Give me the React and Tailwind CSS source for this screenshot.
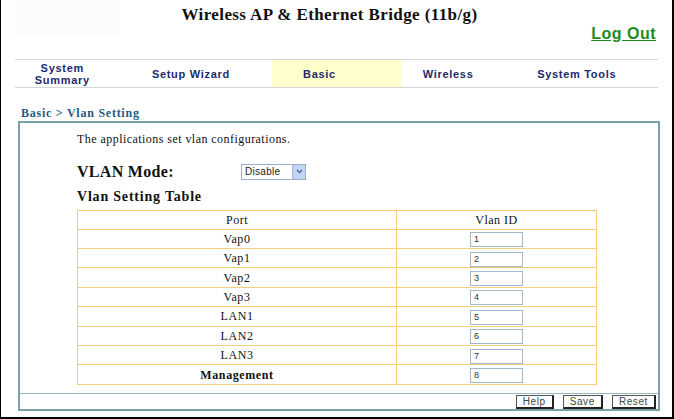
import React from "react";

const serif = { fontFamily: '"Liberation Serif", "Times New Roman", serif' };
const sans = { fontFamily: '"Liberation Sans", Arial, sans-serif' };

const rows = [
  ["Vap0", "1"],
  ["Vap1", "2"],
  ["Vap2", "3"],
  ["Vap3", "4"],
  ["LAN1", "5"],
  ["LAN2", "6"],
  ["LAN3", "7"],
  ["Management", "8"],
];

const nav = ["System Summary", "Setup Wizard", "Basic", "Wireless", "System Tools"];

export default function App() {
  return (
    <div className="w-[674px] h-[419px] bg-white border-l border-r-2 border-b-2 border-black flex flex-col overflow-hidden">
      {/* header */}
      <div className="relative h-[59px] flex flex-col">
        <div className="absolute left-[14px] top-0 w-[104px] h-[36px] bg-[#fbfbfb]" />
        <div className="relative text-center font-bold text-[17px] leading-[20px] pt-[5px] pr-[14px] tracking-[0.4px] text-[#111]" style={serif}>
          Wireless AP &amp; Ethernet Bridge (11b/g)
        </div>
        <div className="relative flex justify-end pr-[16px]">
          <span className="font-bold text-[16px] leading-[18px] tracking-[0.5px] underline text-[#1e8c22]" style={sans}>Log Out</span>
        </div>
      </div>
      {/* nav */}
      <div className="mx-[14px] border-t border-b border-[#d6d6d6] grid grid-cols-5 h-[29px]" style={sans}>
        {nav.map((n) => (
          <div key={n} className={`flex items-center justify-center pr-[34px] text-center font-bold text-[11px] leading-[12px] tracking-[0.7px] text-[#1c2a6e] ${n === "Basic" ? "bg-[#ffffcc]" : ""}`}>
            {n === "System Summary" ? (<span>System<br />Summary</span>) : n}
          </div>
        ))}
      </div>
      {/* breadcrumb */}
      <div className="pl-[20px] pt-[18px] h-[33px] font-bold text-[12px] leading-[14px] tracking-[0.75px] text-[#275a7c]" style={serif}>
        Basic &gt; Vlan Setting
      </div>
      {/* content box */}
      <div className="ml-[17px] mr-[12px] h-[290px] border-2 border-[#7aa0ac] flex flex-col">
        <div className="flex-1 pl-[57px] pt-[9px]">
          <div className="text-[12px] leading-[14px] tracking-[0.45px] text-[#111]" style={serif}>The applications set vlan configurations.</div>
          <div className="flex items-center mt-[16px] h-[19px]">
            <div className="w-[164px] font-bold text-[16px] leading-[18px] tracking-[0.3px] text-[#111]" style={serif}>VLAN Mode:</div>
            <div className="flex items-center h-[16px] border border-[#9bb0c6] bg-white" style={sans}>
              <span className="text-[10px] leading-[12px] px-[3px] text-[#222] w-[50px] tracking-[0.3px]">Disable</span>
              <span className="w-[13px] h-[14px] bg-[#c4d4f4] border-l border-[#a8b8da] flex items-center justify-center">
                <svg width="7" height="5" viewBox="0 0 7 5"><path d="M1 1 L3.5 3.5 L6 1" stroke="#4a62a8" strokeWidth="1.3" fill="none" /></svg>
              </span>
            </div>
          </div>
          <div className="mt-[8px] font-bold text-[14px] leading-[16px] tracking-[0.8px] text-[#111]" style={serif}>Vlan Setting Table</div>
          <table className="mt-[5px] w-[520px] h-[175px] border-collapse border border-[#f2cf78]" style={serif}>
            <tbody>
              <tr>
                <td className="w-[319px] p-0 border border-[#f2cf78] text-center text-[12px] leading-[16px] tracking-[0.5px] text-[#111]">Port</td>
                <td className="p-0 border border-[#f2cf78] text-center text-[12px] leading-[16px] tracking-[0.5px] text-[#111]">Vlan ID</td>
              </tr>
              {rows.map(([p, v]) => (
                <tr key={p}>
                  <td className={`p-0 border border-[#f2cf78] text-center text-[12px] leading-[16px] tracking-[0.6px] text-[#111] ${p === "Management" ? "font-bold" : ""}`}>{p}</td>
                  <td className="p-0 border border-[#f2cf78] text-center leading-[16px]">
                    <div className="inline-block w-[53px] h-[15px] border border-[#a4b8cc] text-left text-[9px] leading-[13px] pl-[3px] text-[#333] align-middle" style={sans}>{v}</div>
                  </td>
                </tr>
              ))}
            </tbody>
          </table>
        </div>
        <div className="border-t border-[#9ab6c2] h-[16px] flex justify-end items-center gap-[9px] pr-[2px]" style={sans}>
          {["Help", "Save", "Reset"].map((b) => (
            <div key={b} className="h-[14px] px-[6px] border border-[#555] border-r-2 border-b-2 border-r-[#222] border-b-[#222] text-[10px] leading-[11px] tracking-[0.6px] text-[#444] flex items-center bg-white">{b}</div>
          ))}
        </div>
      </div>
    </div>
  );
}
